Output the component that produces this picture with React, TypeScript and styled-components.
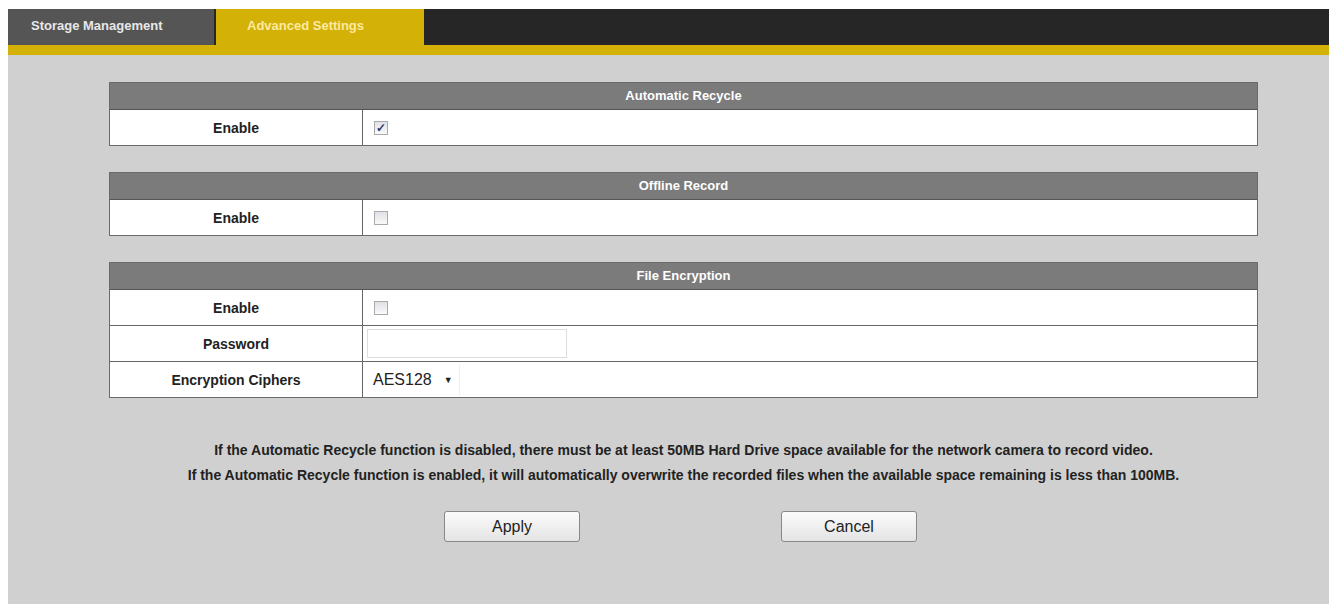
import React from "react";
import styled, { createGlobalStyle } from "styled-components";

const Global = createGlobalStyle`
  body { margin: 0; background: #fff; font-family: "Liberation Sans", Arial, sans-serif; }
`;
const Page = styled.div`padding: 9px 0 0 8px; width: 1321px;`;
const TabBar = styled.div`display: flex; height: 36px; background: #262626; border-bottom: 10px solid #d4b106;`;
const Tab = styled.div<{ $active?: boolean }>`
  width: ${p => (p.$active ? 208 : 206)}px; margin-right: ${p => (p.$active ? 0 : 2)}px;
  background: ${p => (p.$active ? "#d4b106" : "#555")};
  color: ${p => (p.$active ? "#fbeaa0" : "#e8e8e8")};
  font-weight: bold; font-size: 13px; padding: 9px 0 0 ${p => (p.$active ? 31 : 23)}px; box-sizing: border-box;
`;
const Body = styled.div`background: #d0d0d0; padding: 27px 71px 22px 101px; height: 549px; box-sizing: border-box;`;
const Table = styled.div`border: 1px solid #6a6a6a; margin-bottom: 26px; background: #fff;`;
const Head = styled.div`background: #7b7b7b; color: #fff; font-weight: bold; font-size: 13px; height: 26px; line-height: 26px; text-align: center; border-bottom: 1px solid #555;`;
const Row = styled.div`display: grid; grid-template-columns: 253px 1fr; height: 35px; & + & { border-top: 1px solid #666; }`;
const Label = styled.div`font-weight: bold; font-size: 14px; color: #222; display: flex; align-items: center; justify-content: center; border-right: 1px solid #666;`;
const Cell = styled.div`display: flex; align-items: center; padding-left: 9px;`;
const Check = styled.div`width: 12px; height: 12px; border: 1px solid #aaa; background: linear-gradient(#e0e0e8, #fafafa); display: flex; align-items: center; justify-content: center; color: #2a3a6a; font-size: 12px; font-weight: bold; line-height: 1; margin-left: 2px;`;
const Input = styled.div`width: 200px; height: 29px; border: 1px solid #ddd; box-sizing: border-box; margin-left: -5px;`;
const Select = styled.div`font-size: 16px; color: #222; display: flex; align-items: center; gap: 12px; height: 30px; padding-right: 6px; border-right: 1px solid #eee; margin-left: 1px;`;
const Notes = styled.div`padding: 16px 50px 0;`;
const Note = styled.p`margin: 0 0 5px; text-align: center; font-weight: bold; font-size: 14px; color: #222; line-height: 20px;`;
const Buttons = styled.div`display: flex; gap: 201px; padding-left: 335px; margin-top: 26px;`;
const Button = styled.div`width: 134px; height: 29px; border: 1px solid #888; border-radius: 3px; background: linear-gradient(#fbfbfb, #e4e4e4); font-size: 16px; color: #222; display: flex; align-items: center; justify-content: center;`;

export default function App() {
  return (
    <Page>
      <Global />
      <TabBar>
        <Tab>Storage Management</Tab>
        <Tab $active>Advanced Settings</Tab>
      </TabBar>
      <Body>
        <Table>
          <Head>Automatic Recycle</Head>
          <Row><Label>Enable</Label><Cell><Check>✓</Check></Cell></Row>
        </Table>
        <Table>
          <Head>Offline Record</Head>
          <Row><Label>Enable</Label><Cell><Check /></Cell></Row>
        </Table>
        <Table>
          <Head>File Encryption</Head>
          <Row><Label>Enable</Label><Cell><Check /></Cell></Row>
          <Row><Label>Password</Label><Cell><Input /></Cell></Row>
          <Row><Label>Encryption Ciphers</Label><Cell><Select>AES128 <span style={{ fontSize: 9 }}>▼</span></Select></Cell></Row>
        </Table>
        <Notes>
          <Note>If the Automatic Recycle function is disabled, there must be at least 50MB Hard Drive space available for the network camera to record video.</Note>
          <Note>If the Automatic Recycle function is enabled, it will automatically overwrite the recorded files when the available space remaining is less than 100MB.</Note>
        </Notes>
        <Buttons><Button>Apply</Button><Button>Cancel</Button></Buttons>
      </Body>
    </Page>
  );
}
